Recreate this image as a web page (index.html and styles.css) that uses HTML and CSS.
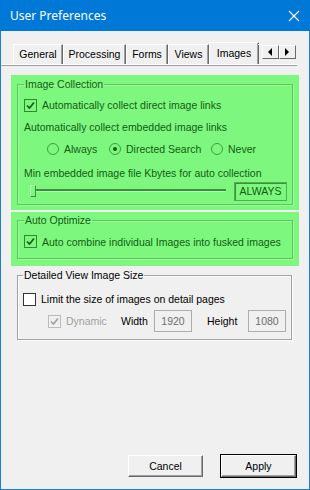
FILE: index.html
```html
<!DOCTYPE html>
<html lang="en">
<head>
    <meta charset="utf-8">
    <meta name="viewport" content="width=device-width,initial-scale=1.0">
    <link rel="stylesheet" href="styles.css">
</head>
<body>
<div class="window">
    <div class="titlebar">
        <span class="title">User Preferences</span>
        <svg class="close" width="12" height="12" viewBox="0 0 12 12"><path d="M1 1 L11 11 M11 1 L1 11" stroke="#fff" stroke-width="1.2"/></svg>
    </div>
    <div class="dialog">
        <div class="tabs">
            <span class="tab w-general">General</span>
            <span class="tab w-processing">Processing</span>
            <span class="tab w-forms">Forms</span>
            <span class="tab w-views">Views</span>
            <span class="tab active w-images">Images</span>
            <span class="tab-stub"></span>
            <span class="spin">
                <span class="spin-btn"><svg width="5" height="8" viewBox="0 0 5 8"><path d="M4 0 L0 4 L4 8 Z" fill="#000"/></svg></span>
                <span class="spin-btn"><svg width="5" height="8" viewBox="0 0 5 8"><path d="M0 0 L4 4 L0 8 Z" fill="#000"/></svg></span>
            </span>
        </div>

        <div class="hl hl-collect">
            <fieldset class="group">
                <legend>Image Collection</legend>
                <div class="row">
                    <span class="check on"><svg width="11" height="11" viewBox="0 0 11 11"><path d="M2 5.5 L4.5 8 L9 2.5" fill="none" stroke-width="1.7"/></svg></span>
                    <span>Automatically collect direct image links</span>
                </div>
                <div class="row">Automatically collect embedded image links</div>
                <div class="row radios">
                    <span class="radio-item w-always"><span class="radio"></span>Always</span>
                    <span class="radio-item w-directed"><span class="radio on"></span>Directed Search</span>
                    <span class="radio-item"><span class="radio"></span>Never</span>
                </div>
                <div class="row label-min">Min embedded image file Kbytes for auto collection</div>
                <div class="slider-row">
                    <span class="slider"><span class="thumb"></span></span>
                    <span class="value-box">ALWAYS</span>
                </div>
            </fieldset>
        </div>

        <div class="hl hl-optimize">
            <fieldset class="group">
                <legend>Auto Optimize</legend>
                <div class="row row-opt">
                    <span class="check on"><svg width="11" height="11" viewBox="0 0 11 11"><path d="M2 5.5 L4.5 8 L9 2.5" fill="none" stroke-width="1.7"/></svg></span>
                    <span>Auto combine individual Images into fusked images</span>
                </div>
            </fieldset>
        </div>

        <fieldset class="group plain">
            <legend>Detailed View Image Size</legend>
            <div class="row">
                <span class="check"></span>
                <span>Limit the size of images on detail pages</span>
            </div>
            <div class="row size-row">
                <span class="check disabled"><svg width="11" height="11" viewBox="0 0 11 11"><path d="M2 5.5 L4.5 8 L9 2.5" fill="none" stroke-width="1.7"/></svg></span>
                <span class="muted w-dynamic">Dynamic</span>
                <span class="w-width">Width</span>
                <span class="field">1920</span>
                <span class="w-height">Height</span>
                <span class="field">1080</span>
            </div>
        </fieldset>

        <div class="buttons">
            <span class="btn">Cancel</span>
            <span class="btn default">Apply</span>
        </div>
    </div>
</div>
</body>
</html>
```

FILE: styles.css
```css
* { box-sizing: border-box; }
body { margin: 0; font-family: "Liberation Sans", Arial, sans-serif; font-size: 10.5px; color: #000; }

.window { width: 310px; height: 490px; background: #1a7fd6; padding: 0 1px 1px; display: flex; flex-direction: column; }
.titlebar { height: 31px; background: #0078d7; margin: 0 -1px; display: flex; align-items: center; justify-content: space-between; padding: 0 10px 0 10px; }
.title { color: #fff; font-family: "Noto Sans", sans-serif; font-size: 12px; }

.dialog { flex: 1; background: #f0f0f0; display: flex; flex-direction: column; }

/* tab strip */
.tabs { display: flex; align-items: flex-end; height: 34px; padding-left: 12px; margin-right: 12px; border-bottom: 1px solid #fff; box-shadow: 0 1px 0 #a0a0a0; }
.tab { height: 20px; line-height: 18px; text-align: center; border: 1px solid #fff; border-right-color: #696969; border-bottom: 0; box-shadow: inset -1px 0 0 #a0a0a0; }
.tab.active { height: 22px; line-height: 20px; margin: 0 -1px 0 0; }
.w-general { width: 50px; }
.w-processing { width: 63px; }
.w-forms { width: 42px; }
.w-views { width: 41px; }
.w-images { width: 50px; }
.tab-stub { width: 4px; height: 20px; border-top: 1px solid #fff; }
.spin { display: flex; align-self: flex-start; margin-top: 14px; }
.spin-btn { width: 17px; height: 14px; display: flex; align-items: center; justify-content: center; background: #f0f0f0; border: 1px solid; border-color: #fff #696969 #696969 #fff; }

/* highlighted areas */
.hl { background: #7ef77e; color: #115e11; margin-left: 10px; width: 288px; }
.hl-collect { margin-top: 10px; padding: 2px 6px 5px; }
.hl-optimize { margin-top: 2px; padding: 1px 6px 7px; }

.group { margin: 0; padding: 0 6px 5px; border: 1px solid #a0a0a0; box-shadow: inset 1px 1px 0 #fff, 1px 1px 0 #fff; min-width: 0; }
.hl .group { border-color: #5cc85c; box-shadow: inset 1px 1px 0 #9dfb9d, 1px 1px 0 #9dfb9d; }
.group legend { padding: 0 1px; line-height: 14px; }

.row { height: 22px; display: flex; align-items: center; white-space: nowrap; }
.hl-collect legend + .row { margin-top: 3px; }
.radios { padding-left: 23px; }
.radio-item { display: flex; align-items: center; gap: 5px; }
.w-always { width: 62px; }
.w-directed { width: 102px; }
.label-min { height: 16px; margin-top: 5px; }

.check { width: 13px; height: 13px; border: 1px solid #333; background: #fff; margin-right: 5px; display: inline-flex; align-items: center; justify-content: center; flex: none; }
.check svg path { stroke: #000; }
.hl .check { border-color: #2c8a2c; background: transparent; }
.hl .check svg path { stroke: #115e11; }
.check.disabled { border-color: #bcbcbc; background: #f0f0f0; }
.check.disabled svg path { stroke: #a0a0a0; }

.radio { width: 12px; height: 12px; border-radius: 50%; border: 1px solid #3f9e3f; display: inline-flex; align-items: center; justify-content: center; }
.radio.on::after { content: ""; width: 4px; height: 4px; border-radius: 50%; background: #115e11; }

.slider-row { height: 18px; display: flex; align-items: center; justify-content: space-between; padding-left: 6px; }
.slider { width: 196px; height: 2px; background: #3c8f3c; box-shadow: 0 1px 0 #b6fbb6; display: flex; align-items: center; }
.thumb { width: 6px; height: 12px; margin-top: 2px; border: 1px solid #3c8f3c; border-top-color: #c4fcc4; border-left-color: #c4fcc4; background: #7ef77e; }
.value-box { width: 53px; height: 19px; line-height: 17px; text-align: center; border: 1px solid #4cb44c; box-shadow: inset 1px 1px 0 #3c8f3c; margin-right: -1px; margin-top: 2px; }

.row-opt { margin-top: 4px; padding-bottom: 1px; }

.plain { margin: 2px 17px 0 16px; padding: 0 5px 7px; }
.plain legend + .row { margin-top: 6px; }
.size-row { padding-left: 25px; }
.muted { color: #a0a0a0; }
.w-dynamic { width: 55px; }
.w-width { width: 33px; }
.w-height { width: 41px; margin-left: 15px; }
.field { width: 38px; height: 22px; line-height: 20px; text-align: center; color: #6d6d6d; border: 1px solid #adadad; background: #f0f0f0; }

.buttons { margin-top: auto; display: flex; justify-content: flex-end; gap: 18px; padding: 0 13px 12px 0; }
.btn { width: 75px; height: 22px; line-height: 20px; text-align: center; background: #f0f0f0; border: 1px solid; border-color: #fff #696969 #696969 #fff; box-shadow: inset -1px -1px 0 #a0a0a0; }
.btn.default { outline: 1px solid #000; outline-offset: 0; }
```
